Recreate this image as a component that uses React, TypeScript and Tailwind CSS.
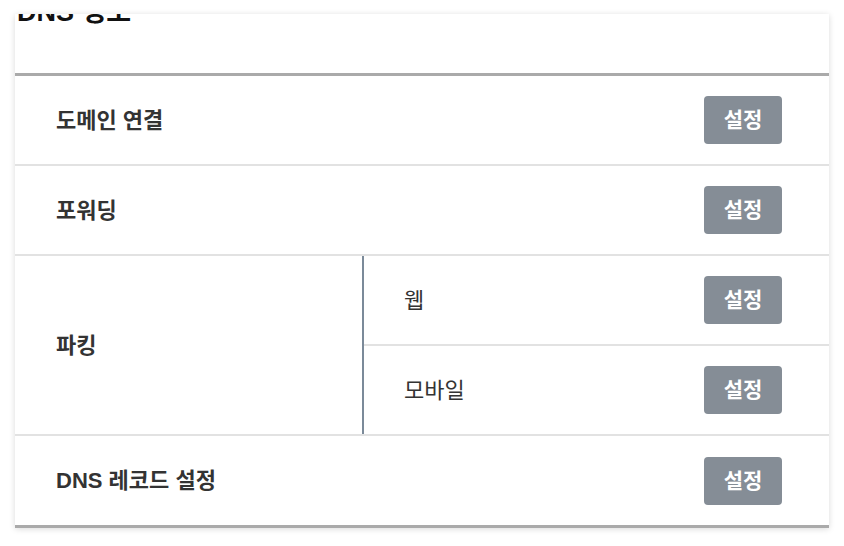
const font = "font-['Liberation_Sans','Noto_Sans_CJK_KR',sans-serif]";

const SetButton = () => (
  <button className="h-[48px] w-[78px] rounded-[4px] bg-[#858d96] text-[21px] font-bold text-white">
    설정
  </button>
);

const Row = ({ label, last }: { label: string; last?: boolean }) => (
  <div
    className={`flex items-center justify-between pl-[41px] pr-[47px] ${
      last ? "h-[89px]" : "h-[90px] border-b-2 border-[#e2e2e2]"
    }`}
  >
    <span className="text-[22px] font-bold text-[#333]">{label}</span>
    <SetButton />
  </div>
);

const SubRow = ({ label, last }: { label: string; last?: boolean }) => (
  <div
    className={`flex items-center justify-between pl-[40px] pr-[47px] ${
      last ? "h-[88px]" : "h-[90px] border-b-2 border-[#e2e2e2]"
    }`}
  >
    <span className="text-[22px] text-[#333]">{label}</span>
    <SetButton />
  </div>
);

export default function App() {
  return (
    <div className={`min-h-[546px] overflow-hidden bg-white px-[15px] pt-[14px] ${font}`}>
      <div className="w-[814px] overflow-hidden bg-white shadow-[0_1px_6px_rgba(0,0,0,0.15)]">
        {/* Header, scrolled past */}
        <div className="flex h-[59px] flex-col">
          <h2 className="mt-[-15px] ml-[2px] text-[27px] leading-[27px] font-bold text-[#111]">DNS 정보</h2>
        </div>
        <div className="border-t-[3px] border-[#aaaaaa]">
          <Row label="도메인 연결" />
          <Row label="포워딩" />
          <div className="flex border-b-2 border-[#e2e2e2]">
            <div className="flex w-[349px] items-center border-r-2 border-[#7b8a99] pl-[41px]">
              <span className="text-[22px] font-bold text-[#333]">파킹</span>
            </div>
            <div className="flex-1">
              <SubRow label="웹" />
              <SubRow label="모바일" last />
            </div>
          </div>
          <Row label="DNS 레코드 설정" last />
        </div>
        <div className="h-[3px] bg-[#aaaaaa]" />
      </div>
    </div>
  );
}
